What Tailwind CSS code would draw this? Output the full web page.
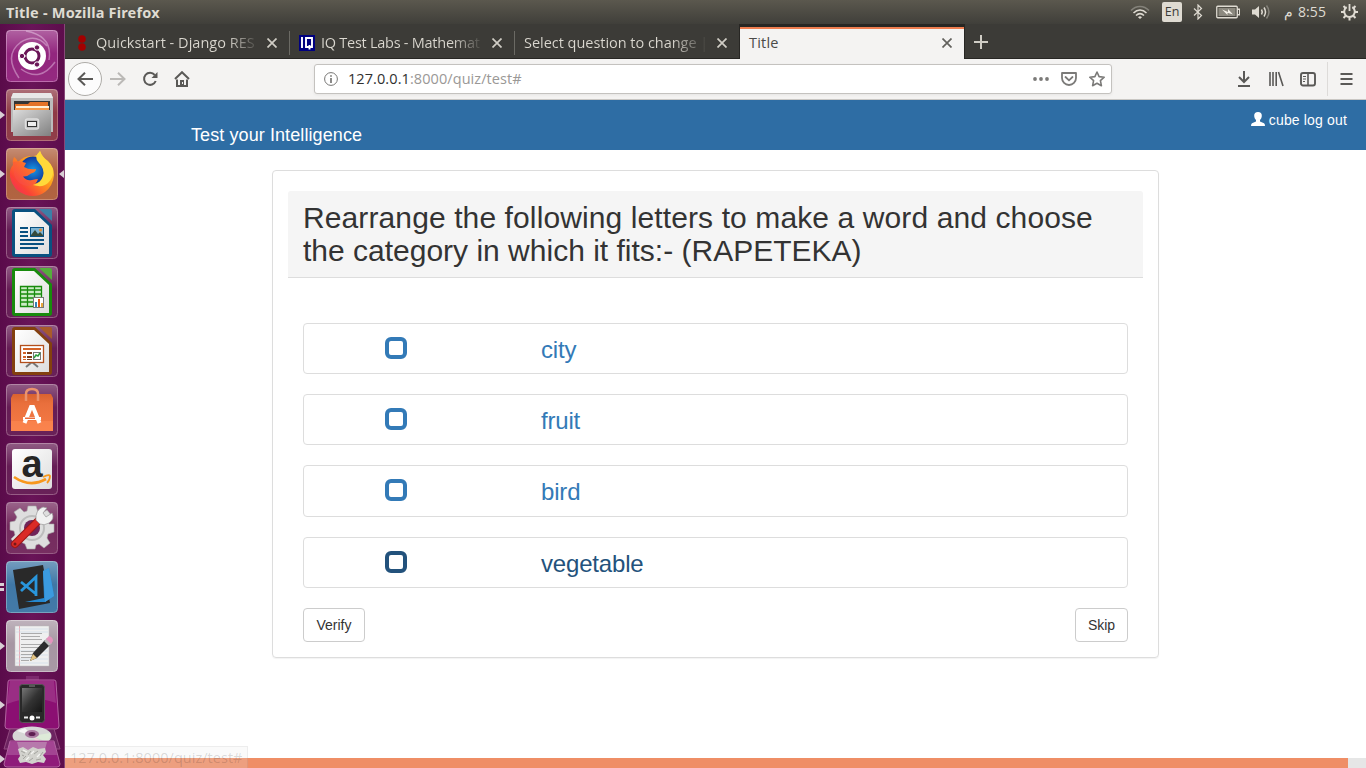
<!DOCTYPE html>
<html lang="en">
<head>
<meta charset="utf-8">
<title>Title - Mozilla Firefox</title>
<script src="https://cdn.jsdelivr.net/npm/@tailwindcss/browser@4"></script>
</head>
<body class="w-[1366px] h-[768px] overflow-hidden flex flex-col bg-white font-['Open_Sans','Noto_Sans',sans-serif]">

<!-- Unity top panel -->
<header class="h-6 shrink-0 flex items-center justify-between pl-[6px] pr-[8px] bg-linear-to-b from-[#5b584e] to-[#403f3a] text-[#dfdbd2]">
  <span class="text-[14.500px] leading-6 font-bold font-['Noto_Sans',sans-serif] tracking-[0.200px] whitespace-nowrap">Title - Mozilla Firefox</span>
  <div class="flex items-center h-6">
    <svg width="20" height="16" viewBox="0 0 20 16" fill="none" stroke-width="1.5"><path d="M1 6.500C6 1 14 1 19 6.500" stroke="#84827a"/><path d="M3.500 9C7.500 5 12.500 5 16.500 9M6 11.500C8.500 9 11.500 9 14 11.500" stroke="#dfdbd2"/><path d="M8 13.200Q10 11.500 12 13.200L10 15Z" fill="#dfdbd2" stroke="none"/></svg>
    <span class="ml-3 w-5 h-5 rounded-[2px] bg-[#dfdbd2] text-[#3c3b37] text-[12.500px] leading-5 text-center">En</span>
    <svg class="ml-[11px]" width="10" height="16" viewBox="0 0 10 16" fill="none" stroke="#dfdbd2" stroke-width="1.200"><path d="M1 4.500L8.500 11.500L5 15V1L8.500 4.500L1 11.500"/></svg>
    <svg class="ml-[13px]" width="24" height="14" viewBox="0 0 24 14"><rect x=".75" y="1.250" width="20.500" height="11.500" rx="1" fill="none" stroke="#dfdbd2" stroke-width="1.300"/><rect x="2.500" y="3" width="17" height="8" fill="#8c897f"/><rect x="21.500" y="4" width="2" height="6" fill="none" stroke="#dfdbd2"/><path d="M6 4.500L12 7V4L17 9.500L11.500 7.800V10Z" fill="#f3f0e8"/></svg>
    <svg class="ml-[11px]" width="20" height="16" viewBox="0 0 20 16" fill="none" stroke-width="1.500"><path d="M1 5.500H4L8 2V14L4 10.500H1Z" fill="#dfdbd2"/><path d="M10.500 5.500Q12 8 10.500 10.500M13 3.500Q16 8 13 12.500" stroke="#dfdbd2"/><path d="M15.500 1.500Q20.500 8 15.500 14.500" stroke="#84827a"/></svg>
    <span class="ml-[13px] w-[42px] flex justify-between text-[14px] leading-6 tracking-[0.100px]"><span>م</span><span>8:55</span></span>
    <svg class="ml-[15px]" width="17" height="18" viewBox="0 0 17 18" fill="none" stroke="#dfdbd2"><path d="M5.700 4.200A5.300 5.300 0 1 0 11.300 4.200" stroke-width="2"/><path d="M8.500 1V8" stroke-width="1.800"/><path d="M0 9H3M14 9H17M8.500 14.500V17.500M2.500 3L4.700 5.200M14.500 3L12.300 5.200M2.500 15L4.700 12.800M14.500 15L12.300 12.800" stroke-width="2"/></svg>
  </div>
</header>

<div class="flex flex-1 min-h-0">

<!-- Launcher -->
<nav class="relative w-[65px] shrink-0 bg-linear-to-r from-[#5a0b4a] via-[#691458] to-[#5d0d4c] border-r border-[#874778] flex flex-col items-start pl-[6px] pt-[6px] gap-[7px] overflow-hidden">
  <svg width="0" height="0" class="absolute">
    <defs>
      <linearGradient id="shine" x1="0" y1="0" x2="0" y2="1"><stop offset="0" stop-color="#fff" stop-opacity=".3"/><stop offset=".45" stop-color="#fff" stop-opacity=".03"/><stop offset="1" stop-color="#fff" stop-opacity=".05"/></linearGradient>
      <linearGradient id="metal" x1="0" y1="0" x2="1" y2="1"><stop offset="0" stop-color="#dcdcdc"/><stop offset="1" stop-color="#808080"/></linearGradient>
      <linearGradient id="flame" x1="1" y1="0" x2="0" y2="1"><stop offset="0" stop-color="#fff14a"/><stop offset=".4" stop-color="#ffa01a"/><stop offset=".75" stop-color="#fa4336"/><stop offset="1" stop-color="#f1246a"/></linearGradient>
      <linearGradient id="head" x1="0" y1="1" x2="1" y2="0"><stop offset="0" stop-color="#f8394a"/><stop offset="1" stop-color="#ff8a1c"/></linearGradient>
      <linearGradient id="paper" x1="0" y1="0" x2="1" y2="1"><stop offset="0" stop-color="#fff"/><stop offset="1" stop-color="#dedede"/></linearGradient>
      <linearGradient id="bag" x1="0" y1="0" x2="0" y2="1"><stop offset="0" stop-color="#d9622f"/><stop offset=".25" stop-color="#e96f3c"/><stop offset="1" stop-color="#f67b46"/></linearGradient>
      <linearGradient id="screen" x1="0" y1="0" x2="1" y2="1"><stop offset="0" stop-color="#777"/><stop offset=".5" stop-color="#333"/><stop offset="1" stop-color="#151515"/></linearGradient>
      <radialGradient id="globe"><stop offset="0" stop-color="#1499e6"/><stop offset="1" stop-color="#12389b"/></radialGradient>
    </defs>
  </svg>

  <!-- Dash -->
  <svg class="shrink-0" width="52" height="52" viewBox="0 0 52 52"><rect x=".5" y=".5" width="51" height="51" rx="4" fill="#8f1f7a" stroke="#b865a8"/><g fill="none" stroke="#cf96c8" stroke-width="1.500" opacity=".65"><path d="M13 48Q-3 25 15 12Q30 3 41 16M20 1Q47 6 43 30M49 32Q34 53 15 39"/></g><rect width="52" height="52" rx="4" fill="url(#shine)"/><circle cx="26" cy="26" r="14" fill="#fff"/><circle cx="26" cy="26" r="7" fill="none" stroke="#6a1557" stroke-width="3"/><g stroke="#fff" stroke-width="1.200"><path d="M16 26H20M30 18L32 16M30 34L32 37"/></g><g fill="#6a1557" stroke="#fff"><circle cx="16" cy="26" r="2.700"/><circle cx="31" cy="17.500" r="2.700"/><circle cx="31" cy="34.500" r="2.700"/></g></svg>
  <!-- Files -->
  <svg class="shrink-0" width="52" height="52" viewBox="0 0 52 52"><rect x=".5" y=".5" width="51" height="51" rx="4" fill="#8b3440" stroke="#ae6870"/><rect width="52" height="52" rx="4" fill="url(#shine)"/><path d="M7 4H45L47 9V43H5V9Z" fill="#bcbcbc"/><path d="M7 4H45L47 9H5Z" fill="#e8e8e8"/><path d="M8 12H44V23H8Z" fill="#353535"/><path d="M9 15H22L24 13H42V23H9Z" fill="#e47328"/><path d="M10 17H43V22H10Z" fill="#fff1d8"/><path d="M9 19H43V23H9Z" fill="#f59a4a"/><path d="M7 21H45V47H7Z" fill="url(#metal)"/><rect x="19.500" y="30" width="13" height="10" rx="2" fill="#bdbdbd" stroke="#dedede" stroke-width="1.500"/><rect x="21.500" y="32.500" width="9" height="5" fill="#eee" stroke="#333"/></svg>
  <!-- Firefox -->
  <svg class="shrink-0" width="52" height="52" viewBox="0 0 52 52"><rect x=".5" y=".5" width="51" height="51" rx="4" fill="#ad5c38" stroke="#c68368"/><rect width="52" height="52" rx="4" fill="url(#shine)"/><path d="M8 9Q11 11 12 14Q18 7 28 8Q33 7 34 3Q36 9 42 13Q48 19 48 27Q47 38 39 44Q31 50 20 47Q7 43 4 29Q3 21 7 17Q6 13 8 9Z" fill="url(#flame)"/><circle cx="27" cy="22" r="13.500" fill="url(#globe)"/><path d="M7 14Q13 12 20 15L18 19Q23 22 30 21Q30 24 25 25.500Q21 29 17 28.500Q20 33 26 32Q30 31 32 31Q30 38 22 38Q11 37 8 26Z" fill="url(#head)"/><path d="M34 3Q27 9 33 15Q39 21 37 28Q35 35 27 37Q37 40 42 35Q48 29 47 22Q45 15 39 11Q35 7 34 3Z" fill="#ffd93a"/></svg>
  <!-- Writer -->
  <svg class="shrink-0" width="52" height="52" viewBox="0 0 52 52"><rect x=".5" y=".5" width="51" height="51" rx="4" fill="#611650" stroke="#92547f"/><rect width="52" height="52" rx="4" fill="url(#shine)"/><path d="M33 2H44Q46 2 46 4V14Z" fill="#3c80a7"/><path d="M9 2H29L46 18V47Q46 50 43 50H9Q6 50 6 47V5Q6 2 9 2Z" fill="#095180"/><path d="M9 5H28L43 19V47H9Z" fill="url(#paper)"/><path d="M14 20H22V22H14ZM14 24H22V26H14ZM14 28H22V30H14ZM14 32H38V34H14ZM14 36H38V38H14ZM14 40H32V42H14Z" fill="#095180"/><rect x="24.500" y="20.500" width="13" height="9" fill="#7fb5d3" stroke="#095180"/><path d="M25 28L29 23L32 27L34 25L37 28V29H25Z" fill="#354a3a"/><circle cx="34.500" cy="23" r="1.500" fill="#e58e31"/></svg>
  <!-- Calc -->
  <svg class="shrink-0" width="52" height="52" viewBox="0 0 52 52"><rect x=".5" y=".5" width="51" height="51" rx="4" fill="#611650" stroke="#92547f"/><rect width="52" height="52" rx="4" fill="url(#shine)"/><path d="M33 2H44Q46 2 46 4V14Z" fill="#55ae3c"/><path d="M9 2H29L46 18V47Q46 50 43 50H9Q6 50 6 47V5Q6 2 9 2Z" fill="#188b0d"/><path d="M9 5H28L43 19V47H9Z" fill="url(#paper)"/><path d="M14.500 20.500H35.500V40.500H14.500ZM14.500 24H35.500M14.500 28H35.500M14.500 32H35.500M14.500 36H35.500M21.500 20.500V40.500M28.500 20.500V40.500" fill="#ccecc6" stroke="#188b0d" stroke-width="1.300"/><rect x="27.500" y="31.500" width="10" height="10" fill="#fff" stroke="#777"/><path d="M29 36H31V41H29Z" fill="#3482b4"/><path d="M32 33H34V41H32Z" fill="#e6550d"/><path d="M35 37H37V41H35Z" fill="#e7a63a"/></svg>
  <!-- Impress -->
  <svg class="shrink-0" width="52" height="52" viewBox="0 0 52 52"><rect x=".5" y=".5" width="51" height="51" rx="4" fill="#611650" stroke="#92547f"/><rect width="52" height="52" rx="4" fill="url(#shine)"/><path d="M33 2H44Q46 2 46 4V14Z" fill="#a95b2a"/><path d="M9 2H29L46 18V47Q46 50 43 50H9Q6 50 6 47V5Q6 2 9 2Z" fill="#83400f"/><path d="M9 5H28L43 19V47H9Z" fill="url(#paper)"/><path d="M20 42L26 37L32 42" fill="none" stroke="#777" stroke-width="2"/><rect x="14.500" y="20.500" width="23" height="17" fill="#fff" stroke="#b34f1c" stroke-width="1.300"/><path d="M17 23H35V25H17ZM17 27H20V29H17ZM17 31H20V33H17ZM17 34H20V35H17Z" fill="#d46327"/><path d="M21 27H26V29H21ZM21 31H26V33H21ZM21 34H26V35H21Z" fill="#7d3d19"/><rect x="27.500" y="27.500" width="7" height="7" fill="#fff" stroke="#777"/><path d="M28 33L30 30L32 31L34 28" fill="none" stroke="#2a9d3d" stroke-width="1.500"/></svg>
  <!-- Software -->
  <svg class="shrink-0" width="52" height="52" viewBox="0 0 52 52"><rect x=".5" y=".5" width="51" height="51" rx="4" fill="#611650" stroke="#92547f"/><rect width="52" height="52" rx="4" fill="url(#shine)"/><path d="M7 10H45L47 14V47H5V14Z" fill="url(#bag)"/><path d="M20 17V10Q20 5 26 5Q32 5 32 10V17" fill="none" stroke="#eb936e" stroke-width="2.500"/><path d="M5 37H47V47H5Z" fill="#ff8b56" opacity=".5"/><path d="M18.500 39L25 23H27L33.500 39" fill="none" stroke="#fff" stroke-width="4"/><path d="M17 33H35V36H17Z" fill="#fff"/><path d="M19 33.500H29V35H19Z" fill="#eb6b3c"/></svg>
  <!-- Amazon -->
  <svg class="shrink-0 overflow-visible" width="52" height="52" viewBox="0 0 52 52"><rect x=".5" y=".5" width="51" height="51" rx="4" fill="#611650" stroke="#92547f"/><rect width="52" height="52" rx="4" fill="url(#shine)"/><rect x="6" y="6" width="40" height="40" rx="3" fill="url(#paper)"/><text x="26" y="34" text-anchor="middle" font-family="Liberation Sans" font-size="38" font-weight="700" fill="#252525">a</text><path d="M8 34Q24 45 40 36" fill="none" stroke="#f7981d" stroke-width="2.700"/><path d="M37 34Q43 31 44 33Q44 37 41 40" fill="none" stroke="#f7981d" stroke-width="1.800"/></svg>
  <!-- Settings -->
  <svg class="shrink-0" width="52" height="52" viewBox="0 0 52 52"><rect x=".5" y=".5" width="51" height="51" rx="4" fill="#702459" stroke="#92547f"/><rect width="52" height="52" rx="4" fill="url(#shine)"/><path d="M22 4H30L32 10L36 11L41 8L46 14L42 18L43 22H48V30L42 32L41 36L44 41L38 46L33 42L30 43L29 47H21L19 42L15 40L10 43L5 37L9 33L8 29L4 28V20L9 19L11 15L8 10L14 6L18 10L21 9Z" fill="#dedede" stroke="#aaa" stroke-width=".6"/><circle cx="26" cy="26" r="12" fill="none" stroke="#bdbdbd" stroke-width="2"/><circle cx="26" cy="26" r="8" fill="#702459"/><path d="M9 42L33 18" stroke="#9c1717" stroke-width="8" stroke-linecap="round"/><path d="M9 42L31 20" stroke="#da2a26" stroke-width="6" stroke-linecap="round"/><circle cx="9" cy="42" r="1.500" fill="#731818"/><path d="M30 18Q29 8 37 5L41 6L37 11L40 15L46 11Q49 17 43 21Q38 24 34 22Z" fill="#f1f1f1" stroke="#999" stroke-width=".7"/></svg>
  <!-- VS Code -->
  <svg class="shrink-0" width="52" height="52" viewBox="0 0 52 52"><rect x=".5" y=".5" width="51" height="51" rx="4" fill="#3a73a3" stroke="#709dbb"/><rect width="52" height="52" rx="4" fill="url(#shine)"/><path d="M7 9L37 4L44 42L13 48Z" fill="#292929"/><path d="M37 10L43 7L48 35L39 41L19 41L38 37Z" fill="#2588d0"/><path d="M43 7L48 35L39 41L37 10Z" fill="#3b9be0"/><path d="M15 21L30 33M15 30L30 16V35" fill="none" stroke="#2996dc" stroke-width="2.800"/></svg>
  <!-- Text editor -->
  <svg class="shrink-0" width="52" height="52" viewBox="0 0 52 52"><rect x=".5" y=".5" width="51" height="51" rx="4" fill="#a493a0" stroke="#c7bac3"/><rect width="52" height="52" rx="4" fill="url(#shine)"/><path d="M9 6H43V46H9Z" fill="#efefef" stroke="#bbb" stroke-width=".5"/><path d="M13.500 6V46" stroke="#e7abb7"/><path d="M10 9H42M10 12H42M10 31H42M10 35H42M10 39H42M10 43H42" stroke="#c8d6e5" stroke-width=".6"/><path d="M15 13.500H36M15 16.500H34M15 19.500H36M15 24.500H37M15 27.500H35M15 31.500H31M15 34.500H28M15 37.500H26M15 40.500H23" stroke="#999" stroke-width=".8"/><path d="M24 41L27 33L39 20L44 25L31 38Z" fill="#2c2c2c"/><path d="M24 41L27 34L31 38Z" fill="#e3c482"/><path d="M38 21L41 18L46 23L43 26Z" fill="#bbb"/><path d="M40 19L43 16Q47 17 47 21L45 24Z" fill="#e494bd"/></svg>
  <!-- Folded stack of devices -->
  <svg class="shrink-0 -ml-[6px] -mt-[3px]" width="64" height="92" viewBox="0 676 64 92"><path d="M26 675H39V684H26Z" fill="#7d2a6d"/><path d="M10 680H54Q56 680 56 682L59 726Q59 729 56 729H8Q5 729 5 726L8 682Q8 680 10 680Z" fill="#8b0f72" stroke="#b264a1"/><path d="M10 681H54L56 703Q32 694 7 704Z" fill="#fff" opacity=".13"/><rect x="19.500" y="684.500" width="25" height="38" rx="3" fill="#292929" stroke="#555"/><rect x="22" y="688" width="20" height="24" fill="url(#screen)"/><path d="M29 686H35" stroke="#888"/><path d="M24 717.500H28M36 717.500H40" stroke="#eee" stroke-width="2"/><circle cx="32" cy="718" r="2.500" fill="#fff"/><path d="M10 729H54L60 749H4Z" fill="#6c2360" stroke="#934b80"/><ellipse cx="32" cy="736" rx="19.500" ry="9.500" fill="#d6d6d6"/><path d="M32 736L50 733Q52 737 47 742Z" fill="#ddead8"/><path d="M32 736L45 743L39 745Z" fill="#f0d5dc"/><path d="M32 736L17 731L25 728Z" fill="#f4f4f4"/><ellipse cx="32" cy="734" rx="7" ry="4" fill="#a8779f"/><ellipse cx="32" cy="734" rx="3.500" ry="2" fill="#5d1d51"/><path d="M10 741H54L60 764Q60 767 57 767H7Q4 767 4 764Z" fill="#8f1c7a" stroke="#b264a1"/><path d="M10 742H54L57 755H7Z" fill="#fff" opacity=".18"/><path d="M17 742H47L44 753H20Z" fill="#ddd" opacity=".35"/><path d="M18 749L23 747L28 750L33 747L38 749L45 748L46 752L43 755L46 759L44 763L38 762L32 764L26 762L20 763L18 759L20 756Z" fill="#d2d2cd"/><path d="M21 751L25 753M28 755L31 751M34 754L38 751M40 756L43 752M23 759L26 756M29 761L33 758M36 760L41 759M22 755L24 756" fill="none" stroke="#a4a49f" stroke-width="1"/><path d="M23 750L27 752M31 754L34 751M37 757L40 754M26 760L29 757" fill="none" stroke="#f4f4f1" stroke-width="1.300"/></svg>
  <!-- Running markers -->
  <svg class="absolute left-0 top-0" width="64" height="744" viewBox="0 24 64 744" fill="#d8cfd5"><path d="M0 111L5 115L0 119ZM0 170L5 174L0 178ZM64 170L59 174L64 178ZM0 583H4V586H0ZM0 588H4V591H0ZM0 642L5 646L0 650ZM0 701L5 705L0 709ZM0 755L5 759L0 763Z"/></svg>
</nav>

<!-- Firefox window -->
<main class="relative flex-1 min-w-0 flex flex-col">
  <!-- Tabs -->
  <div class="h-[35px] shrink-0 flex bg-[#3c3b37] text-[#dbd8d0] text-[14.500px] leading-[20px] whitespace-nowrap">
    <div class="w-[225px] flex items-center pl-[13px] pt-[3px] border-b border-[#272623] relative">
      <svg width="8" height="16" viewBox="0 0 8 16" fill="#a30000"><circle cx="4" cy="4" r="3.800"/><circle cx="4" cy="12" r="3.800"/></svg>
      <span class="ml-[10px] w-[164px] tracking-[0.020px] bg-linear-to-r from-[#dbd8d0] from-80% to-transparent bg-clip-text text-transparent">Quickstart - Django RES</span>
      <svg class="ml-[7px]" width="10" height="10" viewBox="0 0 10 10" stroke="#d0cdc5" stroke-width="1.700"><path d="M.5.500L9.500 9.500M9.500.500L.5 9.500"/></svg>
      <i class="absolute right-0 top-[7px] w-px h-6 bg-[#6b6a64]"></i>
    </div>
    <div class="w-[225px] flex items-center pl-[9px] pt-[3px] border-b border-[#272623] relative">
      <svg width="16" height="16" viewBox="0 0 16 16"><path d="M0 0H16V16H0Z" fill="#000080"/><path d="M3 2V13M7 3H13V12H7ZM10.500 10V14.500" fill="none" stroke="#fff" stroke-width="1.900"/></svg>
      <span class="ml-[6px] w-[163px] tracking-[-0.260px] bg-linear-to-r from-[#dbd8d0] from-80% to-transparent bg-clip-text text-transparent">IQ Test Labs - Mathemat</span>
      <svg class="ml-[8px]" width="10" height="10" viewBox="0 0 10 10" stroke="#d0cdc5" stroke-width="1.700"><path d="M.5.500L9.500 9.500M9.500.500L.5 9.500"/></svg>
      <i class="absolute right-0 top-[7px] w-px h-6 bg-[#6b6a64]"></i>
    </div>
    <div class="w-[224px] flex items-center pl-[9px] pt-[3px] border-b border-[#272623]">
      <span class="w-[184px] tracking-[-0.030px] bg-linear-to-r from-[#dbd8d0] from-80% to-transparent bg-clip-text text-transparent">Select question to change |</span>
      <svg class="ml-[9px]" width="10" height="10" viewBox="0 0 10 10" stroke="#d0cdc5" stroke-width="1.700"><path d="M.5.500L9.500 9.500M9.500.500L.5 9.500"/></svg>
    </div>
    <div class="w-[226px] pt-[3px] bg-[#272623] px-px">
      <div class="h-[32px] border-t-2 border-[#ef7e50] bg-[#f4f3f2] text-[#4a4a48] flex items-center justify-between pl-[9px] pr-[12px] pb-[2px]">
        <span class="tracking-[0.200px]">Title</span>
        <svg width="10" height="10" viewBox="0 0 10 10" stroke="#62615d" stroke-width="1.700"><path d="M.5.500L9.500 9.500M9.500.500L.5 9.500"/></svg>
      </div>
    </div>
    <div class="flex-1 border-b border-[#272623] pl-[9px] pt-[11px]">
      <svg width="14" height="14" viewBox="0 0 14 14" stroke="#d0cdc5" stroke-width="2"><path d="M7 0V14M0 7H14"/></svg>
    </div>
  </div>

  <!-- Navigation toolbar -->
  <div class="h-[41px] shrink-0 border-b border-[#c9c7c4] bg-[#f4f3f2] flex items-center pl-[3px] relative">
    <div class="w-[34px] h-[34px] rounded-full border border-[#aeaca8] bg-[#fcfcfc] grid place-items-center"><svg width="16" height="14" viewBox="0 0 16 14" fill="none" stroke="#5a5957" stroke-width="2"><path d="M16 7H1.500M8 .8L1.500 7L8 13.200"/></svg></div>
    <svg class="ml-[8px]" width="16" height="14" viewBox="0 0 16 14" fill="none" stroke="#bbb9b7" stroke-width="2"><path d="M0 7H14.500M8 .8L14.500 7L8 13.200"/></svg>
    <svg class="ml-[16px]" width="16" height="16" viewBox="0 0 16 16" fill="none" stroke="#5a5957" stroke-width="2"><path d="M12.700 4A6 6 0 1 0 13.700 10"/><path d="M15.500 1V7H9.500Z" fill="#5a5957" stroke="none"/></svg>
    <svg class="ml-[16px]" width="16" height="16" viewBox="0 0 16 16"><path d="M1 8L8 1.200L15 8" fill="none" stroke="#5a5957" stroke-width="2"/><path d="M3 8.500V15H13V8.500" fill="none" stroke="#5a5957" stroke-width="2"/><path d="M6 9H10V15H6Z" fill="#5a5957"/><path d="M8 11H9V13H8Z" fill="#f4f3f2"/></svg>
    <div class="ml-[124px] w-[798px] h-[30px] rounded-[3px] border border-[#c4c2bf] bg-white shadow-[0_1px_3px_rgba(0,0,0,0.060)] flex items-center pl-[9px] pr-[6px]">
      <svg width="14" height="14" viewBox="0 0 14 14" fill="none" stroke="#777674"><circle cx="7" cy="7" r="6.400"/><path d="M7 6V11M7 3.200V4.800" stroke-width="1.700"/></svg>
      <span class="ml-[10px] text-[14.500px] leading-5 text-[#9a9896] tracking-[0.080px]"><span class="text-[#30302f]">127.0.0.1</span>:8000/quiz/test#</span>
      <svg class="ml-auto" width="16" height="6" viewBox="0 0 16 6" fill="#7b7a78"><circle cx="2" cy="3" r="1.900"/><circle cx="8" cy="3" r="1.900"/><circle cx="14" cy="3" r="1.900"/></svg>
      <svg class="ml-[12px]" width="16" height="16" viewBox="0 0 16 16" fill="none" stroke="#7b7a78" stroke-width="1.800"><path d="M1 2H15V7A7 7 0 0 1 1 7Z" stroke-linejoin="round"/><path d="M4.500 6L8 9.300L11.500 6" stroke-linecap="round"/></svg>
      <svg class="ml-[12px]" width="16" height="16" viewBox="0 0 16 16" fill="none" stroke="#7b7a78" stroke-width="1.600" stroke-linejoin="round"><path d="M8 1L10.100 5.600L15.200 6.200L11.400 9.600L12.400 14.700L8 12.200L3.600 14.700L4.600 9.600L.8 6.200L5.900 5.600Z"/></svg>
    </div>
    <svg class="ml-[124px]" width="16" height="16" viewBox="0 0 16 16" fill="none" stroke="#5a5957" stroke-width="2"><path d="M8 0V11M3 6L8 11L13 6M2 15H14"/></svg>
    <svg class="ml-[16px]" width="16" height="16" viewBox="0 0 16 16" stroke="#5a5957" stroke-width="1.600"><path d="M2 1V15M5 1V15M8.200 1V15M10.500 1L15 15"/></svg>
    <svg class="ml-[16px]" width="16" height="16" viewBox="0 0 16 16" fill="none" stroke="#5a5957"><rect x="1" y="2" width="14" height="12.500" rx="2" stroke-width="1.900"/><path d="M8 2V14" stroke-width="1.600"/><path d="M3 5.500H6M3 8H6M3 10.500H5"/></svg>
    <i class="ml-[11px] w-px h-[34px] bg-[#dddbd9]"></i>
    <svg class="ml-[12px]" width="13" height="14" viewBox="0 0 13 14" stroke="#5a5957" stroke-width="2"><path d="M.5 2H12.500M.5 7H12.500M.5 12H12.500"/></svg>
  </div>

  <!-- Web page -->
  <div class="flex-1 min-h-0 flex flex-col font-['Liberation_Sans',Arial,sans-serif] bg-white">
    <div class="h-[50px] shrink-0 bg-[#2e6da4] text-white flex justify-between pl-[126px] pr-[19px]">
      <h1 class="text-[18px] leading-5 pt-[25px] tracking-[0.090px]">Test your Intelligence</h1>
      <a class="h-5 mt-[10px] flex items-center text-[14px] leading-5 tracking-[0.160px]"><svg class="mr-[4px] -mt-[2px]" width="14" height="14" viewBox="0 0 14 14" fill="#fff"><path d="M7 0C9.500 0 11 1.500 10.800 4C10.700 6 9.800 7 9 8V9.500L13 11.300Q14 11.800 14 14H0Q0 11.800 1 11.300L5 9.500V8C4.200 7 3.300 6 3.200 4C3 1.500 4.500 0 7 0Z"/></svg>cube log out</a>
    </div>
    <section class="ml-[207px] mt-5 w-[887px] h-[488px] shrink-0 rounded border border-[#ddd] shadow-[0_1px_1px_rgba(0,0,0,0.050)] px-[15px] pt-5">
      <h2 class="h-[87px] rounded-t-[3px] bg-[#f5f5f5] border-b border-[#ddd] px-[15px] py-[10px] text-[30px] leading-[33px] text-[#333] whitespace-nowrap"><span class="tracking-[0.107px]">Rearrange the following letters to make a word and choose</span><br>the category in which it fits:- (RAPETEKA)</h2>
      <div class="mt-[45px] px-[15px] flex flex-col gap-5 text-[24px] leading-[34px] text-[#337ab7] tracking-[-0.180px]">
        <div class="h-[51.200px] rounded border border-[#ddd] flex items-start pl-[81px] pt-[9px]"><i class="mt-1 size-[22px] rounded-[6px] border-4 border-current"></i><span class="ml-[134px]">city</span></div>
        <div class="h-[51.200px] rounded border border-[#ddd] flex items-start pl-[81px] pt-[9px]"><i class="mt-1 size-[22px] rounded-[6px] border-4 border-current"></i><span class="ml-[134px]">fruit</span></div>
        <div class="h-[51.200px] rounded border border-[#ddd] flex items-start pl-[81px] pt-[9px]"><i class="mt-1 size-[22px] rounded-[6px] border-4 border-current"></i><span class="ml-[134px]">bird</span></div>
        <div class="h-[51.200px] rounded border border-[#ddd] flex items-start pl-[81px] pt-[9px] text-[#23527c]"><i class="mt-1 size-[22px] rounded-[6px] border-4 border-current"></i><span class="ml-[134px]">vegetable</span></div>
      </div>
      <div class="mt-5 px-[15px] flex justify-between text-[14px] leading-5 text-[#333]">
        <button class="w-[62px] h-[34px] rounded border border-[#ccc] bg-white">Verify</button>
        <button class="w-[53px] h-[34px] rounded border border-[#ccc] bg-white">Skip</button>
      </div>
    </section>
    <div class="mt-auto h-[10px] bg-[#e6e6e6]"><div class="w-[1283px] h-full bg-[#ef8e66]"></div></div>
  </div>
  <!-- Link status -->
  <div class="absolute left-0 bottom-0 w-[183px] h-[22px] border-t border-r border-black/5 bg-[#e8e8e8]/20 pl-[5px] text-[14.500px] leading-[22px] text-black/15 tracking-[0.030px] whitespace-nowrap">127.0.0.1:8000/quiz/test#</div>
</main>
</div>
</body>
</html>
